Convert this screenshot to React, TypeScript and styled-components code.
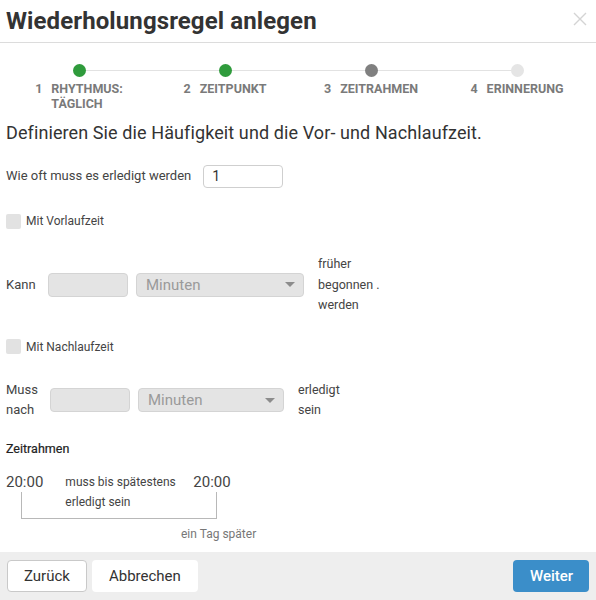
import styled, { createGlobalStyle } from 'styled-components';

const steps = [
  { no: 1, label: 'RHYTHMUS:', sub: 'TÄGLICH', state: 'done' },
  { no: 2, label: 'ZEITPUNKT', state: 'done' },
  { no: 3, label: 'ZEITRAHMEN', state: 'active' },
  { no: 4, label: 'ERINNERUNG', state: 'todo' },
] as const;

type DotState = 'done' | 'active' | 'todo';

export default function App() {
  return (
    <Dialog>
      <GlobalStyle />
      <Header>
        <Title>Wiederholungsregel anlegen</Title>
        <Close aria-label="Schließen">
          <svg width="16" height="16" viewBox="0 0 16 16">
            <path d="M2 2 L14 14 M14 2 L2 14" stroke="#d4d4d4" strokeWidth="1.4" />
          </svg>
        </Close>
      </Header>

      <Body>
        <Stepper>
          <Track />
          {steps.map((s) => (
            <Step key={s.no}>
              <Dot $state={s.state} />
              <StepLabel>
                <span>{s.no}</span>
                <span>
                  {s.label}
                  {'sub' in s && (
                    <>
                      <br />
                      {s.sub}
                    </>
                  )}
                </span>
              </StepLabel>
            </Step>
          ))}
        </Stepper>

        <Lead>Definieren Sie die Häufigkeit und die Vor- und Nachlaufzeit.</Lead>

        <FreqRow>
          <Label>Wie oft muss es erledigt werden</Label>
          <NumberInput defaultValue="1" />
        </FreqRow>

        <CheckRow>
          <Box />
          Mit Vorlaufzeit
        </CheckRow>

        <OffsetRow>
          <Label $w={42}>Kann</Label>
          <GreyInput $w={80} />
          <Select $w={168}>
            Minuten
            <Caret />
          </Select>
          <Suffix>
            früher
            <br />
            begonnen .
            <br />
            werden
          </Suffix>
        </OffsetRow>

        <CheckRow>
          <Box />
          Mit Nachlaufzeit
        </CheckRow>

        <OffsetRow>
          <Label $w={44}>
            Muss
            <br />
            nach
          </Label>
          <GreyInput $w={80} />
          <Select $w={146}>
            Minuten
            <Caret />
          </Select>
          <Suffix>
            erledigt
            <br />
            sein
          </Suffix>
        </OffsetRow>

        <SectionTitle>Zeitrahmen</SectionTitle>

        <Frame>
          <Time>20:00</Time>
          <FrameText>
            muss bis spätestens
            <br />
            erledigt sein
          </FrameText>
          <Time>20:00</Time>
          <Bracket />
        </Frame>
        <NextDay>ein Tag später</NextDay>
      </Body>

      <Footer>
        <Button $variant="outline">Zurück</Button>
        <Button $variant="plain">Abbrechen</Button>
        <Spacer />
        <Button $variant="primary">Weiter</Button>
      </Footer>
    </Dialog>
  );
}

const GlobalStyle = createGlobalStyle`
  html, body {
    margin: 0;
    padding: 0;
    background: #ffffff;
  }
  body {
    font-family: Roboto, "Liberation Sans", sans-serif;
    color: #333333;
  }
`;

const Dialog = styled.div`
  width: 596px;
  height: 600px;
  display: flex;
  flex-direction: column;
  background: #ffffff;
`;

const Header = styled.header`
  height: 42px;
  border-bottom: 1px solid #dcdcdc;
  display: flex;
  align-items: center;
  justify-content: space-between;
  padding: 0 8px 0 6px;
`;

const Title = styled.h1`
  margin: 0;
  font-size: 24px;
  font-weight: 700;
  color: #333333;
  letter-spacing: 0.1px;
`;

const Close = styled.button`
  border: 0;
  background: none;
  padding: 0;
  display: flex;
  margin-top: -4px;
`;

const Body = styled.main`
  flex: 1;
  padding: 0 6px;
`;

const Stepper = styled.div`
  position: relative;
  display: grid;
  grid-template-columns: repeat(4, 146px);
  padding-top: 21px;
  height: 58px;
`;

const Track = styled.div`
  position: absolute;
  top: 27px;
  left: 73px;
  width: 438px;
  height: 1px;
  background: #e2e2e2;
`;

const Step = styled.div`
  display: flex;
  flex-direction: column;
  align-items: center;
  position: relative;
`;

const dotColor: Record<DotState, string> = {
  done: '#2f9b3c',
  active: '#808080',
  todo: '#e5e5e5',
};

const Dot = styled.div<{ $state: DotState }>`
  width: 13px;
  height: 13px;
  border-radius: 50%;
  background: ${(p) => dotColor[p.$state]};
`;

const StepLabel = styled.div`
  display: flex;
  gap: 9px;
  margin-top: 4px;
  font-size: 12.5px;
  font-weight: 700;
  line-height: 15px;
  color: #7a7a7a;
  text-align: left;
`;

const Lead = styled.h2`
  margin: 0 0 20px;
  font-size: 18px;
  font-weight: 400;
  color: #333333;
  line-height: 22px;
  letter-spacing: 0.1px;
`;

const FreqRow = styled.div`
  display: flex;
  align-items: center;
  gap: 12px;
  height: 24px;
`;

const Label = styled.div<{ $w?: number }>`
  font-size: 13px;
  line-height: 20px;
  color: #444444;
  ${(p) => (p.$w ? `width: ${p.$w}px;` : '')}
`;

const NumberInput = styled.input`
  width: 80px;
  height: 23px;
  box-sizing: border-box;
  border: 1px solid #cfcfcf;
  border-radius: 4px;
  padding: 0 8px;
  font: 14px Roboto, sans-serif;
  color: #333333;
  outline: none;
`;

const CheckRow = styled.div`
  display: flex;
  align-items: center;
  gap: 5px;
  margin-top: 25px;
  font-size: 12px;
  color: #444444;
  height: 16px;
`;

const Box = styled.span`
  width: 15px;
  height: 15px;
  border-radius: 2px;
  background: #e2e2e2;
`;

const OffsetRow = styled.div`
  display: flex;
  align-items: center;
  margin-top: 25px;
  margin-bottom: -2px;
`;

const GreyInput = styled.div<{ $w: number }>`
  width: ${(p) => p.$w}px;
  height: 24px;
  box-sizing: border-box;
  border: 1px solid #d4d4d4;
  border-radius: 4px;
  background: #e4e4e4;
`;

const Select = styled.div<{ $w: number }>`
  width: ${(p) => p.$w}px;
  height: 24px;
  margin-left: 8px;
  box-sizing: border-box;
  border: 1px solid #d4d4d4;
  border-radius: 4px;
  background: #e4e4e4;
  display: flex;
  align-items: center;
  justify-content: space-between;
  padding: 0 8px 0 9px;
  font-size: 15px;
  color: #9a9a9a;
`;

const Caret = styled.span`
  width: 0;
  height: 0;
  border-left: 5px solid transparent;
  border-right: 5px solid transparent;
  border-top: 5px solid #8c8c8c;
`;

const Suffix = styled.div`
  margin-left: 14px;
  font-size: 12.5px;
  line-height: 20.5px;
  color: #444444;
`;

const SectionTitle = styled.div`
  margin-top: 22px;
  font-size: 12.5px;
  font-weight: 400;
  color: #222222;
  -webkit-text-stroke: 0.2px #222222;
`;

const Frame = styled.div`
  position: relative;
  display: flex;
  align-items: flex-start;
  margin-top: 16px;
  height: 48px;
`;

const Time = styled.div`
  font-size: 15px;
  line-height: 20px;
  color: #444444;
  background: #ffffff;
  position: relative;
  z-index: 1;
`;

const FrameText = styled.div`
  width: 128px;
  margin-left: 22px;
  font-size: 12px;
  line-height: 20px;
  color: #444444;
`;

const Bracket = styled.div`
  position: absolute;
  left: 15px;
  top: 10px;
  width: 194px;
  height: 36px;
  border: 1px solid #b8b8b8;
  border-top: 0;
`;

const NextDay = styled.div`
  margin: 7px 0 0 175px;
  font-size: 12px;
  color: #777777;
`;

type Variant = 'outline' | 'plain' | 'primary';

const Footer = styled.footer`
  height: 48px;
  background: #eeeeee;
  display: flex;
  align-items: center;
  gap: 5px;
  padding: 0 7px;
`;

const Spacer = styled.div`
  flex: 1;
`;

const Button = styled.button<{ $variant: Variant }>`
  height: 32px;
  padding: 0 16px;
  border-radius: 4px;
  font-family: Roboto, sans-serif;
  font-size: 15px;
  border: 1px solid
    ${(p) => (p.$variant === 'outline' ? '#c9c9c9' : 'transparent')};
  background: ${(p) => (p.$variant === 'primary' ? '#3b8ec9' : '#ffffff')};
  color: ${(p) => (p.$variant === 'primary' ? '#ffffff' : '#333333')};
  font-weight: ${(p) => (p.$variant === 'primary' ? 500 : 400)};
  ${(p) => (p.$variant === 'primary' ? 'width: 76px;' : '')}
`;
